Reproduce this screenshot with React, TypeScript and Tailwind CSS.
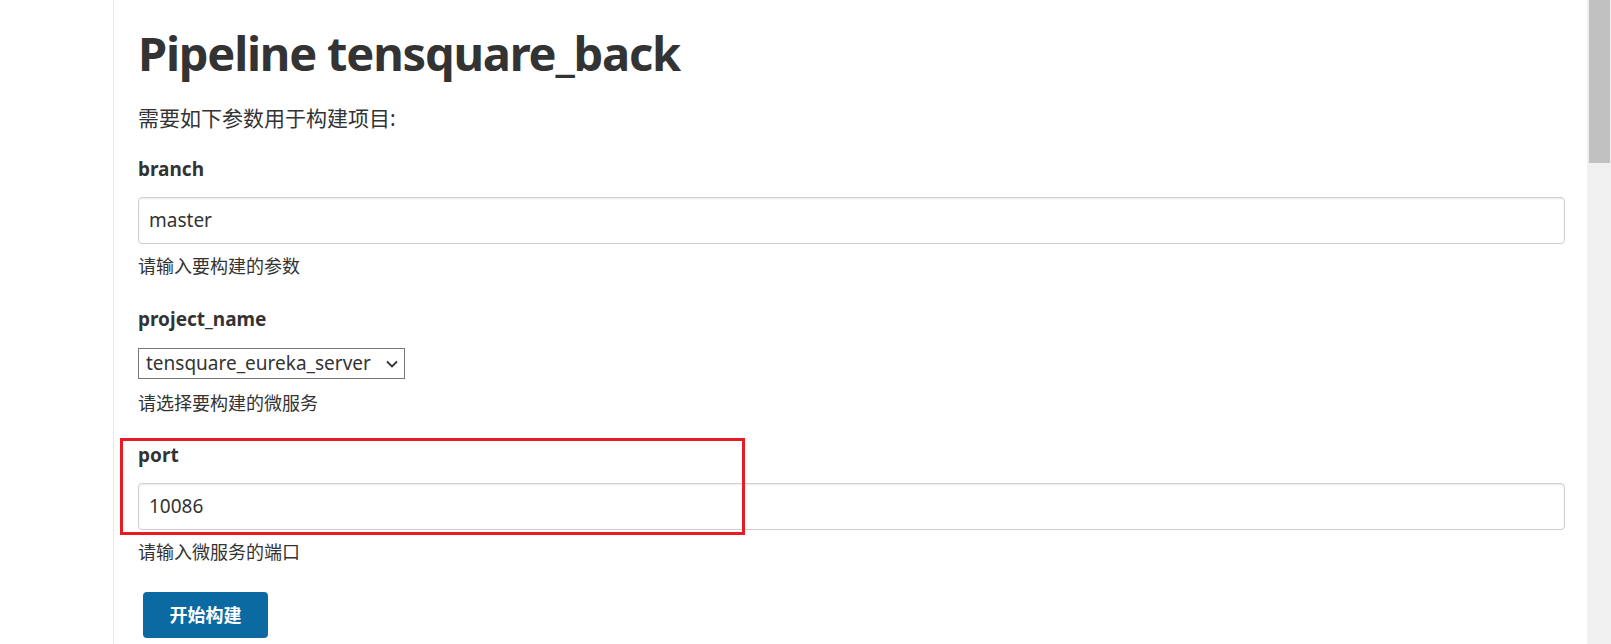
const sans = "font-['Noto_Sans','Noto_Sans_CJK_SC',sans-serif]";

function Label({ children, mt }: { children: string; mt: string }) {
  return (
    <div className={`${mt} text-[19px] leading-[28px] font-bold text-[#333]`}>
      {children}
    </div>
  );
}

function Help({ children, mt }: { children: string; mt: string }) {
  return <div className={`${mt} text-[18px] leading-[24px] text-[#333]`}>{children}</div>;
}

function TextBox({ value, mt }: { value: string; mt: string }) {
  return (
    <div
      className={`${mt} h-[47px] w-full rounded-[4px] border border-[#cfcfcf] bg-white pl-[10px] flex items-center text-[19px] text-[#333] shadow-[inset_0_1px_2px_rgba(0,0,0,0.08)]`}
    >
      {value}
    </div>
  );
}

export default function App() {
  return (
    <div className={`${sans} relative flex h-[644px] w-[1611px] overflow-hidden bg-white`}>
      {/* left gutter */}
      <div className="w-[113px] shrink-0" />
      <div className="w-px shrink-0 bg-[#e4eaee]" />

      {/* main */}
      <div className="flex-1 pl-[24px] pr-[22px] pt-[29px]">
        <h1 className="text-[47px] leading-[48px] font-bold text-[#333] tracking-[-1.2px]">
          Pipeline tensquare_back
        </h1>
        <div className="mt-[27px] text-[21px] leading-[28px] text-[#333]">需要如下参数用于构建项目:</div>

        <Label mt="mt-[23px]">branch</Label>
        <TextBox mt="mt-[14px]" value="master" />
        <Help mt="mt-[10px]">请输入要构建的参数</Help>

        <Label mt="mt-[27px]">project_name</Label>
        <div className="mt-[15px] flex h-[31px] w-[267px] items-center justify-between border border-[#767676] pl-[7px] pr-[6px] text-[19px] text-[#333]">
          <span>tensquare_eureka_server</span>
          <svg width="12" height="8" viewBox="0 0 12 8" fill="none" stroke="#333" strokeWidth="1.8">
            <path d="M1 1.5 L6 6.5 L11 1.5" />
          </svg>
        </div>
        <Help mt="mt-[12px]">请选择要构建的微服务</Help>

        <Label mt="mt-[26px]">port</Label>
        <TextBox mt="mt-[14px]" value="10086" />
        <Help mt="mt-[10px]">请输入微服务的端口</Help>

        <button className="mt-[28px] ml-[5px] flex h-[46px] w-[125px] items-center justify-center rounded-[4px] bg-[#0b6aa2] text-[18px] font-bold text-white">
          开始构建
        </button>
      </div>

      {/* scrollbar */}
      <div className="w-[24px] shrink-0 bg-[#f0f0f0] pl-[2px] pr-px">
        <div className="h-[163px] w-full bg-[#c1c1c1]" />
      </div>

      {/* annotation */}
      <div className="pointer-events-none absolute left-[120px] top-[438px] h-[97px] w-[625px] border-[3px] border-[#e81c24]" />
    </div>
  );
}
